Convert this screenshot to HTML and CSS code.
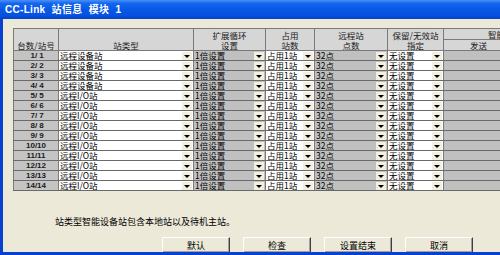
FILE: index.html
```html
<!DOCTYPE html>
<html>
<head>
<meta charset="utf-8">
<title>CC-Link 站信息</title>
<link rel="stylesheet" href="styles.css">
</head>
<body>
<div class="window">
  <div class="titlebar"><span class="title">CC-Link&nbsp; 站信息&nbsp; 模块&nbsp; 1</span></div>
  <div class="client">
    <div class="grid-wrap">
      <table class="grid">
        <colgroup>
          <col class="c1"><col class="c2"><col class="c3"><col class="c4"><col class="c5"><col class="c6"><col class="c7">
        </colgroup>
        <thead>
          <tr class="h1">
            <th rowspan="2" class="bottom">台数/站号</th>
            <th rowspan="2" class="bottom">站类型</th>
            <th rowspan="2">扩展循环<br>设置</th>
            <th rowspan="2">占用<br>站数</th>
            <th rowspan="2">远程站<br>点数</th>
            <th rowspan="2">保留/无效站<br>指定</th>
            <th class="smart">智能</th>
          </tr>
          <tr class="h2"><th>发送</th></tr>
        </thead>
        <tbody>
          <tr><td class="no"> 1/ 1</td><td class="w"><div class="dd"><span>远程设备站</span><i></i></div></td><td class="g"><div class="dd"><span>1倍设置</span><i></i></div></td><td class="w"><div class="dd"><span>占用1站</span><i></i></div></td><td class="g"><div class="dd"><span>32点</span><i></i></div></td><td class="w"><div class="dd"><span>无设置</span><i></i></div></td><td class="g"></td></tr>
          <tr><td class="no"> 2/ 2</td><td class="w"><div class="dd"><span>远程设备站</span><i></i></div></td><td class="g"><div class="dd"><span>1倍设置</span><i></i></div></td><td class="w"><div class="dd"><span>占用1站</span><i></i></div></td><td class="g"><div class="dd"><span>32点</span><i></i></div></td><td class="w"><div class="dd"><span>无设置</span><i></i></div></td><td class="g"></td></tr>
          <tr><td class="no"> 3/ 3</td><td class="w"><div class="dd"><span>远程设备站</span><i></i></div></td><td class="g"><div class="dd"><span>1倍设置</span><i></i></div></td><td class="w"><div class="dd"><span>占用1站</span><i></i></div></td><td class="g"><div class="dd"><span>32点</span><i></i></div></td><td class="w"><div class="dd"><span>无设置</span><i></i></div></td><td class="g"></td></tr>
          <tr><td class="no"> 4/ 4</td><td class="w"><div class="dd"><span>远程设备站</span><i></i></div></td><td class="g"><div class="dd"><span>1倍设置</span><i></i></div></td><td class="w"><div class="dd"><span>占用1站</span><i></i></div></td><td class="g"><div class="dd"><span>32点</span><i></i></div></td><td class="w"><div class="dd"><span>无设置</span><i></i></div></td><td class="g"></td></tr>
          <tr><td class="no"> 5/ 5</td><td class="w"><div class="dd"><span>远程I/O站</span><i></i></div></td><td class="g"><div class="dd"><span>1倍设置</span><i></i></div></td><td class="w"><div class="dd"><span>占用1站</span><i></i></div></td><td class="g"><div class="dd"><span>32点</span><i></i></div></td><td class="w"><div class="dd"><span>无设置</span><i></i></div></td><td class="g"></td></tr>
          <tr><td class="no"> 6/ 6</td><td class="w"><div class="dd"><span>远程I/O站</span><i></i></div></td><td class="g"><div class="dd"><span>1倍设置</span><i></i></div></td><td class="w"><div class="dd"><span>占用1站</span><i></i></div></td><td class="g"><div class="dd"><span>32点</span><i></i></div></td><td class="w"><div class="dd"><span>无设置</span><i></i></div></td><td class="g"></td></tr>
          <tr><td class="no"> 7/ 7</td><td class="w"><div class="dd"><span>远程I/O站</span><i></i></div></td><td class="g"><div class="dd"><span>1倍设置</span><i></i></div></td><td class="w"><div class="dd"><span>占用1站</span><i></i></div></td><td class="g"><div class="dd"><span>32点</span><i></i></div></td><td class="w"><div class="dd"><span>无设置</span><i></i></div></td><td class="g"></td></tr>
          <tr><td class="no"> 8/ 8</td><td class="w"><div class="dd"><span>远程I/O站</span><i></i></div></td><td class="g"><div class="dd"><span>1倍设置</span><i></i></div></td><td class="w"><div class="dd"><span>占用1站</span><i></i></div></td><td class="g"><div class="dd"><span>32点</span><i></i></div></td><td class="w"><div class="dd"><span>无设置</span><i></i></div></td><td class="g"></td></tr>
          <tr><td class="no"> 9/ 9</td><td class="w"><div class="dd"><span>远程I/O站</span><i></i></div></td><td class="g"><div class="dd"><span>1倍设置</span><i></i></div></td><td class="w"><div class="dd"><span>占用1站</span><i></i></div></td><td class="g"><div class="dd"><span>32点</span><i></i></div></td><td class="w"><div class="dd"><span>无设置</span><i></i></div></td><td class="g"></td></tr>
          <tr><td class="no">10/10</td><td class="w"><div class="dd"><span>远程I/O站</span><i></i></div></td><td class="g"><div class="dd"><span>1倍设置</span><i></i></div></td><td class="w"><div class="dd"><span>占用1站</span><i></i></div></td><td class="g"><div class="dd"><span>32点</span><i></i></div></td><td class="w"><div class="dd"><span>无设置</span><i></i></div></td><td class="g"></td></tr>
          <tr><td class="no">11/11</td><td class="w"><div class="dd"><span>远程I/O站</span><i></i></div></td><td class="g"><div class="dd"><span>1倍设置</span><i></i></div></td><td class="w"><div class="dd"><span>占用1站</span><i></i></div></td><td class="g"><div class="dd"><span>32点</span><i></i></div></td><td class="w"><div class="dd"><span>无设置</span><i></i></div></td><td class="g"></td></tr>
          <tr><td class="no">12/12</td><td class="w"><div class="dd"><span>远程I/O站</span><i></i></div></td><td class="g"><div class="dd"><span>1倍设置</span><i></i></div></td><td class="w"><div class="dd"><span>占用1站</span><i></i></div></td><td class="g"><div class="dd"><span>32点</span><i></i></div></td><td class="w"><div class="dd"><span>无设置</span><i></i></div></td><td class="g"></td></tr>
          <tr><td class="no">13/13</td><td class="w"><div class="dd"><span>远程I/O站</span><i></i></div></td><td class="g"><div class="dd"><span>1倍设置</span><i></i></div></td><td class="w"><div class="dd"><span>占用1站</span><i></i></div></td><td class="g"><div class="dd"><span>32点</span><i></i></div></td><td class="w"><div class="dd"><span>无设置</span><i></i></div></td><td class="g"></td></tr>
          <tr><td class="no">14/14</td><td class="w"><div class="dd"><span>远程I/O站</span><i></i></div></td><td class="g"><div class="dd"><span>1倍设置</span><i></i></div></td><td class="w"><div class="dd"><span>占用1站</span><i></i></div></td><td class="g"><div class="dd"><span>32点</span><i></i></div></td><td class="w"><div class="dd"><span>无设置</span><i></i></div></td><td class="g"></td></tr>
        </tbody>
      </table>
    </div>
    <p class="note">站类型智能设备站包含本地站以及待机主站。</p>
    <div class="buttons">
      <button class="btn">默认</button>
      <button class="btn">检查</button>
      <button class="btn">设置结束</button>
      <button class="btn">取消</button>
    </div>
  </div>
</div>
</body>
</html>
```

FILE: styles.css
```css
* { box-sizing: border-box; margin: 0; padding: 0; }
html, body { width: 500px; height: 255px; overflow: hidden; }
body {
  background: #ECE9D8;
  font-family: "Noto Sans CJK SC", "Liberation Sans", sans-serif;
  font-size: 9px;
  line-height: 9px;
  color: #000;
}
.window {
  width: 500px;
  height: 255px;
  display: flex;
  flex-direction: column;
  border-bottom: 3px solid #0841D0;
}
.titlebar {
  height: 19px;
  flex: none;
  background: linear-gradient(#4A90F8 0%, #1466EE 18%, #0858E6 50%, #0652E0 80%, #0343C8 100%);
  display: flex;
  align-items: center;
  padding-left: 5px;
}
.title {
  color: #fff;
  font-family: "Liberation Sans", "Noto Sans CJK SC", sans-serif;
  font-weight: bold;
  font-size: 10px;
  line-height: 12px;
  letter-spacing: 0.3px;
  white-space: pre;
}
.client {
  flex: 1;
  border-left: 3px solid #0841D0;
  padding: 9px 0 0 10px;
  overflow: hidden;
  display: flex;
  flex-direction: column;
}
.grid-wrap { width: 487px; overflow: hidden; flex: none; }
.grid {
  border-collapse: collapse;
  table-layout: fixed;
  width: 500px;
}
.c1 { width: 45px; }
.c2 { width: 135px; }
.c3 { width: 72px; }
.c4 { width: 49px; }
.c5 { width: 73px; }
.c6 { width: 56px; }
.c7 { width: 70px; }
.grid th {
  background: #D6D6D6;
  border: 1px solid #7A7A7A;
  font-weight: normal;
  font-size: 8.5px;
  color: #202020;
  height: 10px;
  padding: 0;
  vertical-align: middle;
  text-align: center;
  line-height: 10px;
  white-space: nowrap;
}
.grid th.bottom { vertical-align: bottom; padding-bottom: 0; }
.grid th.smart { text-align: left; padding-left: 44px; }
.grid td {
  height: 10px;
  padding: 0;
  font-size: 8.5px;
  line-height: 9px;
  border-top: 1px solid #6A6A6A;
  border-bottom: 1px solid #6A6A6A;
  border-left: 1px solid #7A7A7A;
  border-right: 1px solid #7A7A7A;
  white-space: pre;
}
.grid td.no {
  background: #C4C4C4;
  text-align: center;
  color: #1a1a1a;
  font-family: "Liberation Sans", sans-serif;
  font-weight: bold;
  font-size: 8px;
}
.grid td.w { background: #FFFFFF; }
.grid td.g { background: #C0C0C0; }
.dd {
  display: flex;
  align-items: center;
  height: 9px;
  padding-left: 1px;
}
.dd span { flex: 1; white-space: nowrap; line-height: 9px; }
.dd i {
  flex: none;
  width: 10px;
  height: 8px;
  background: #F2EFE0;
  margin-right: 1px;
  display: flex;
  align-items: center;
  justify-content: center;
}
.dd i::after {
  content: "";
  width: 0;
  height: 0;
  border-left: 3px solid transparent;
  border-right: 3px solid transparent;
  border-top: 3px solid #000;
  margin-top: 1px;
}
.note {
  margin-top: 26px;
  padding-left: 42px;
  color: #000;
  line-height: 9px;
  flex: none;
}
.buttons {
  margin-top: 11px;
  display: flex;
  padding-left: 149px;
  gap: 13px;
}
.btn {
  width: 68px;
  height: 16px;
  background: #ECE9D8;
  font-family: "Noto Sans CJK SC", sans-serif;
  font-size: 9px;
  line-height: 9px;
  color: #000;
  border: 1px solid;
  border-color: #FFFFFF #404040 #404040 #FFFFFF;
  box-shadow: inset -1px -1px 0 #A0A0A0;
}
```
